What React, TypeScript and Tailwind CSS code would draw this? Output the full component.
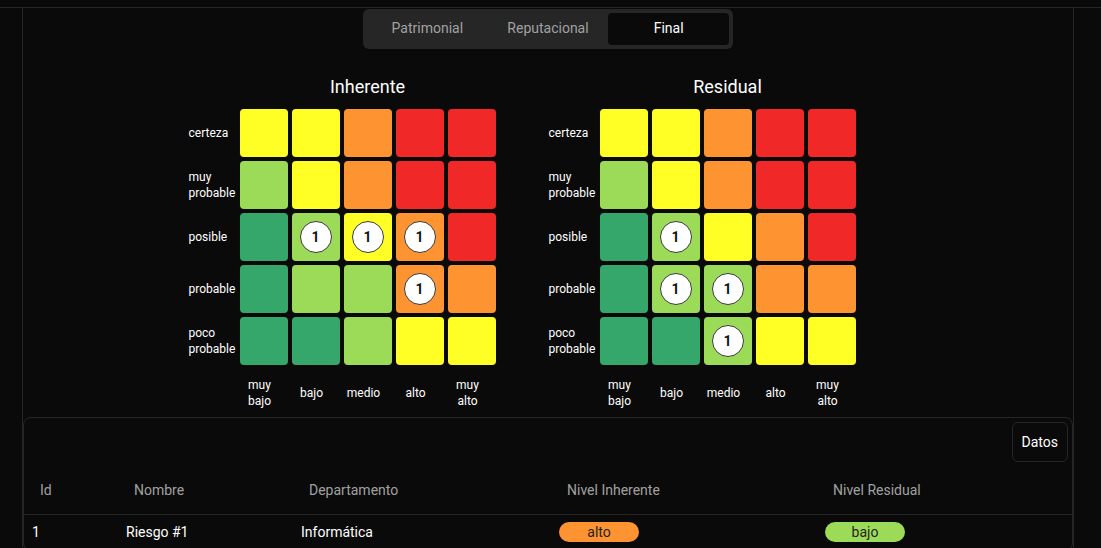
import React, { useState } from 'react';

type Level = 'dg' | 'lg' | 'y' | 'o' | 'r';

const colorClass: Record<Level, string> = {
  dg: 'bg-[#36a76b]',
  lg: 'bg-[#9cdb57]',
  y: 'bg-[#ffff25]',
  o: 'bg-[#fd9331]',
  r: 'bg-[#f02828]',
};

const rows = ['certeza', 'muy probable', 'posible', 'probable', 'poco probable'];
const cols = ['muy bajo', 'bajo', 'medio', 'alto', 'muy alto'];

const matrix: Level[][] = [
  ['y', 'y', 'o', 'r', 'r'],
  ['lg', 'y', 'o', 'r', 'r'],
  ['dg', 'lg', 'y', 'o', 'r'],
  ['dg', 'lg', 'lg', 'o', 'o'],
  ['dg', 'dg', 'lg', 'y', 'y'],
];

// counts per cell, keyed "row-col"
const inherentCounts: Record<string, number> = { '2-1': 1, '2-2': 1, '2-3': 1, '3-3': 1 };
const residualCounts: Record<string, number> = { '2-1': 1, '3-1': 1, '3-2': 1, '4-2': 1 };

const HeatMap: React.FC<{ title: string; counts: Record<string, number> }> = ({ title, counts }) => (
  <div className="grid grid-cols-[48px_repeat(5,48px)] gap-1">
    <div className="col-start-2 col-span-5 h-7 mb-1 flex items-center justify-center text-lg text-white">
      {title}
    </div>
    {rows.map((label, r) => (
      <React.Fragment key={label}>
        <div className="flex items-center pl-px text-xs leading-4 text-white">{label}</div>
        {matrix[r].map((lvl, c) => {
          const n = counts[`${r}-${c}`];
          return (
            <div key={c} className={`h-12 w-12 rounded-[4px] flex items-center justify-center ${colorClass[lvl]}`}>
              {n ? (
                <div className="h-8 w-8 rounded-full bg-white border border-[#3a3a3a] flex items-center justify-center text-sm font-bold text-[#111]">
                  {n}
                </div>
              ) : null}
            </div>
          );
        })}
      </React.Fragment>
    ))}
    <div />
    {cols.map((c) => (
      <div key={c} className="mt-2 h-8 pr-2 flex items-center justify-center">
        <span className="w-10 text-center text-xs leading-4 text-white">{c}</span>
      </div>
    ))}
  </div>
);

const App: React.FC = () => {
  const [tab, setTab] = useState('Final');
  const tabs = ['Patrimonial', 'Reputacional', 'Final'];

  return (
    <div
      className="min-h-screen bg-[#0a0a0a] text-white"
      style={{ fontFamily: 'Roboto, "Noto Sans", Arial, sans-serif' }}
    >
      <div className="h-[7px]" />
      <div className="border-t border-[#262626]">
        <div className="ml-[22px] w-[1052px] border-x border-[#262626] min-h-[540px]">
          {/* Tabs */}
          <div className="flex justify-center pt-px">
            <div className="grid grid-cols-3 w-[370px] h-10 p-1 rounded-md bg-[#262626]">
              {tabs.map((t) => (
                <button
                  key={t}
                  onClick={() => setTab(t)}
                  className={`rounded-sm text-sm leading-5 pb-0.5 ${
                    tab === t ? 'bg-[#0a0a0a] text-white' : 'text-[#a1a1a1]'
                  }`}
                >
                  {t}
                </button>
              ))}
            </div>
          </div>

          {/* Heat maps */}
          <div className="mt-6 flex justify-center gap-[52px] pr-[53px]">
            <HeatMap title="Inherente" counts={inherentCounts} />
            <HeatMap title="Residual" counts={residualCounts} />
          </div>

          {/* Table card */}
          <div className="mt-2 border border-[#262626] rounded-lg">
            <div className="flex justify-end p-1">
              <button className="h-10 px-[9px] rounded-md border border-[#262626] text-sm text-white">
                Datos
              </button>
            </div>
            <table className="w-full table-fixed text-sm">
              <thead>
                <tr className="border-b border-[#262626]">
                  <th className="w-[94px] h-12 px-4 text-left font-normal text-[#a1a1a1]">Id</th>
                  <th className="w-[175px] h-12 px-4 text-left font-normal text-[#a1a1a1]">Nombre</th>
                  <th className="w-[258px] h-12 px-4 text-left font-normal text-[#a1a1a1]">Departamento</th>
                  <th className="w-[266px] h-12 px-4 text-left font-normal text-[#a1a1a1]">Nivel Inherente</th>
                  <th className="h-12 px-4 text-left font-normal text-[#a1a1a1]">Nivel Residual</th>
                </tr>
              </thead>
              <tbody>
                <tr>
                  <td className="px-2 pt-[7px] pb-2">1</td>
                  <td className="px-2 pt-[7px] pb-2">Riesgo #1</td>
                  <td className="px-2 pt-[7px] pb-2">Informática</td>
                  <td className="px-2 pt-[7px] pb-2">
                    <span className="inline-flex w-20 h-5 items-center justify-center rounded-full bg-[#fd9331] text-[#1f1f1f]">
                      alto
                    </span>
                  </td>
                  <td className="px-2 pt-[7px] pb-2">
                    <span className="inline-flex w-20 h-5 items-center justify-center rounded-full bg-[#9cdb57] text-[#1f1f1f]">
                      bajo
                    </span>
                  </td>
                </tr>
              </tbody>
            </table>
          </div>
        </div>
      </div>
    </div>
  );
};

export default App;
